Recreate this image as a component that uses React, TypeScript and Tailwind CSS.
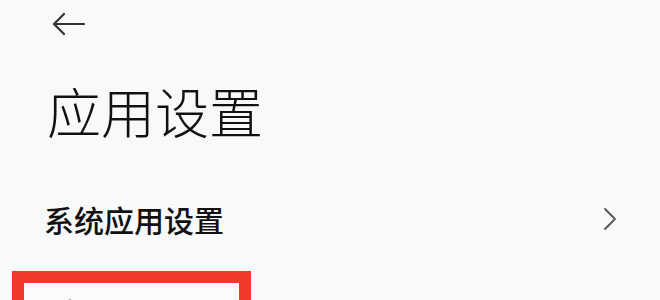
export default function App() {
  return (
    <div className="w-[660px] h-[300px] overflow-hidden bg-[#f8f9fb] font-['Noto_Sans_CJK_SC','Noto_Sans',sans-serif] text-[#111]">
      <div className="pl-[52px] pt-[12px]">
        <svg width="33" height="24" viewBox="0 0 33 24" fill="none" stroke="#333" strokeWidth="2.2" strokeLinecap="round" strokeLinejoin="round">
          <path d="M32 12H3" />
          <path d="M12 2L2 12l10 10" />
        </svg>
      </div>

      <h1 className="mt-[48px] pl-[47px] text-[54px] leading-none font-light">应用设置</h1>

      <div className="mt-[66px] flex items-center justify-between pl-[44px] pr-[43px]">
        <span className="text-[30px] leading-none font-medium">系统应用设置</span>
        <svg width="14" height="22" viewBox="0 0 14 22" fill="none" stroke="#555" strokeWidth="1.8" strokeLinecap="round" strokeLinejoin="round">
          <path d="M2 1l10 10-10 10" />
        </svg>
      </div>

      <div className="mt-[37px] ml-[12px] w-[239px] h-[60px] border-[12px] border-[#f0382c] bg-[#fbfbfd] pl-[30px] pt-[14px]">
        <span className="text-[30px] leading-none font-medium text-[#666]">应用双开</span>
      </div>
    </div>
  );
}
